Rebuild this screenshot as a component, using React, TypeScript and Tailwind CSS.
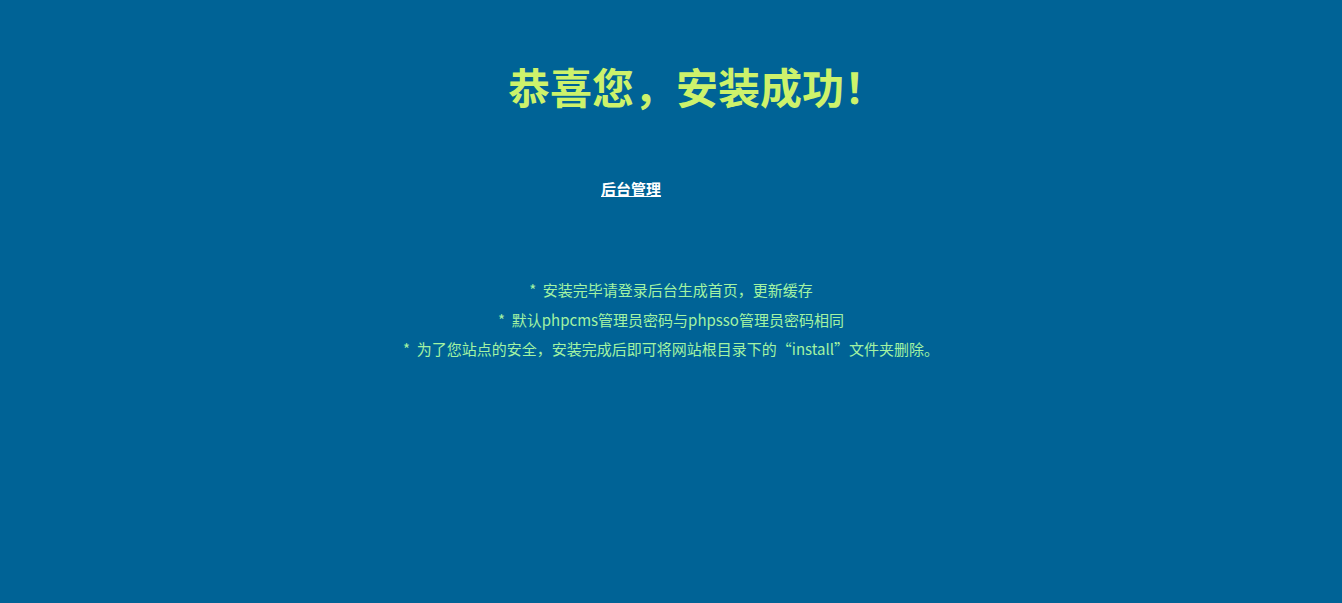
import React from 'react';

const notes = [
  '安装完毕请登录后台生成首页，更新缓存',
  '默认phpcms管理员密码与phpsso管理员密码相同',
  '为了您站点的安全，安装完成后即可将网站根目录下的“install”文件夹删除。',
];

export default function App() {
  return (
    <div
      className="min-h-[603px] w-full bg-[#006396] flex flex-col items-center"
      style={{ fontFamily: '"Microsoft YaHei", "Noto Sans CJK SC", "Noto Sans", sans-serif' }}
    >
      {/* Title */}
      <h1 className="mt-[62px] pl-[52px] text-[42px] leading-[48px] font-bold text-[#cdf26b]">
        恭喜您，安装成功！
      </h1>

      {/* Links */}
      <div className="mt-[66px] grid grid-cols-2 w-[160px]">
        <div className="text-center">
          <a href="#" className="text-[15px] leading-[20px] font-bold text-white underline">
            后台管理
          </a>
        </div>
        <div />
      </div>

      {/* Notes */}
      <ul className="mt-[75px] flex flex-col items-center text-[15px] leading-[29.5px] text-[#a3f3a3]">
        {notes.map((n) => (
          <li key={n}>
            *&nbsp;&nbsp;{n}
          </li>
        ))}
      </ul>
    </div>
  );
}
